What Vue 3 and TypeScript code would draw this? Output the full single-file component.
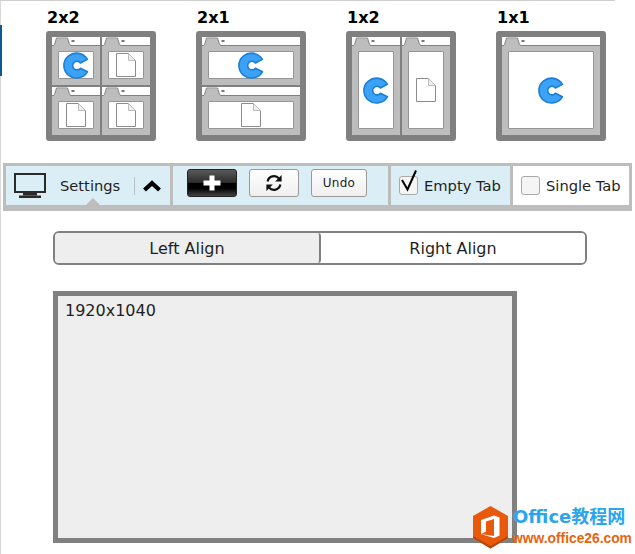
<script setup lang="ts">
type Pane = 'c' | 'doc'
interface Tile { label: string; cols: number; rows: number; panes: Pane[] }
const tiles: Tile[] = [
  { label: '2x2', cols: 2, rows: 2, panes: ['c', 'doc', 'doc', 'doc'] },
  { label: '2x1', cols: 1, rows: 2, panes: ['c', 'doc'] },
  { label: '1x2', cols: 2, rows: 1, panes: ['c', 'doc'] },
  { label: '1x1', cols: 1, rows: 1, panes: ['c'] },
]
</script>

<template>
  <div class="page">
    <i class="edge-top"></i>
    <i class="edge-left"></i>
    <i class="edge-blue"></i>

    <section class="tiles">
      <div v-for="t in tiles" :key="t.label" class="tile">
        <div class="tile-label">{{ t.label }}</div>
        <div class="tile-box" :style="{ gridTemplateColumns: `repeat(${t.cols}, 1fr)`, gridTemplateRows: `repeat(${t.rows}, 1fr)` }">
          <div v-for="(p, i) in t.panes" :key="i" class="pane">
            <div class="strip">
              <svg width="30" height="9" viewBox="0 0 30 9" class="tab">
                <path d="M1.5 10 L1.5 8.5 L2.5 8 L4.5 1.5 L15.5 1.5 L17.5 8 L19 8.5 L19 10 Z" fill="#bdbdbd" />
                <path d="M0 8.5 L1.5 8.5 L2.5 7.5 L4.5 1 L15.5 1 L17.5 7.5 L19 8.5" fill="none" stroke="#808080" stroke-width="1" />
                <rect x="19.5" y="3" width="3" height="2" fill="#777" />
              </svg>
            </div>
            <div class="pane-body">
              <div class="frame">
                <svg v-if="p === 'c'" width="28" height="27" viewBox="-1 -1 28 27">
                  <path d="M24.4 6.4 A12.6 12.4 0 1 0 24.4 18.8 L17.4 15.2 A4.3 4.3 0 1 1 17.4 10 Z" fill="#3ba2f7" stroke="#1c7fd6" stroke-width="1.6" stroke-linejoin="round" />
                </svg>
                <svg v-else width="20" height="24" viewBox="0 0 20 24">
                  <path d="M.5 .5 H12.5 L19.5 7.5 V23.5 H.5 Z" fill="#fff" stroke="#8c8c8c" />
                  <path d="M12.5 .5 V7.5 H19.5" fill="#eee" stroke="#bbb" />
                </svg>
              </div>
            </div>
          </div>
        </div>
      </div>
    </section>

    <section class="toolbar">
      <div class="group settings">
        <svg class="monitor" width="32" height="25" viewBox="0 0 32 25">
          <rect x="1" y="1" width="30" height="18" fill="none" stroke="#2a2a2a" stroke-width="2" />
          <rect x="9" y="20" width="14" height="2.5" fill="#2a2a2a" />
          <rect x="5" y="22.5" width="22" height="2.5" fill="#2a2a2a" />
        </svg>
        <span class="settings-text">Settings</span>
        <span class="vsep"></span>
        <svg class="chev" width="18" height="12" viewBox="0 0 18 12">
          <path d="M1.5 10 L9 3.2 L16.5 10" fill="none" stroke="#000" stroke-width="4.2" stroke-linejoin="miter" />
        </svg>
        <i class="notch"></i>
      </div>
      <div class="group actions">
        <button class="btn-add" type="button">
          <svg width="18" height="16" viewBox="0 0 18 16">
            <path d="M6.5 .5 H11.5 V5.5 H17.5 V10.5 H11.5 V15.5 H6.5 V10.5 H.5 V5.5 H6.5 Z" fill="#fff" />
          </svg>
        </button>
        <button class="btn-light btn-refresh" type="button">
          <svg width="18" height="18" viewBox="0 0 18 18">
            <path d="M2.6 7.5 A6.6 6.6 0 0 1 14 4.4" fill="none" stroke="#111" stroke-width="2.2" />
            <path d="M16.6 1 V7.4 H10.2 Z" fill="#111" />
            <path d="M15.4 10.5 A6.6 6.6 0 0 1 4 13.6" fill="none" stroke="#111" stroke-width="2.2" />
            <path d="M1.4 17 V10.6 H7.8 Z" fill="#111" />
          </svg>
        </button>
        <button class="btn-light btn-undo" type="button">Undo</button>
      </div>
      <label class="group check active">
        <span class="box">
          <svg width="22" height="28" viewBox="0 0 22 28">
            <path d="M5 13 L10.5 22.5 L19 3.5" fill="none" stroke="#000" stroke-width="2" />
          </svg>
        </span>
        <span class="check-text">Empty Tab</span>
      </label>
      <label class="group check plain">
        <span class="box"></span>
        <span class="check-text">Single Tab</span>
      </label>
    </section>

    <section class="segment">
      <button class="seg seg-on" type="button">Left Align</button>
      <button class="seg" type="button">Right Align</button>
    </section>

    <section class="screen">1920x1040</section>

    <div class="mark">
      <svg width="37" height="44" viewBox="0 0 37 44">
        <path d="M18.5 1 L36 11 V33 L18.5 43.5 L1 33 V11 Z" fill="#e8590c" />
        <path d="M1 33 L18.5 43.5 L36 33 V31 L18.5 41 L1 31 Z" fill="#b8450a" />
        <path d="M9 15 L22 10.5 L27.5 12.5 V30.5 L22 33 L9 29 L22 31 V14 L14 16.5 V26.5 L9 29 Z" fill="#fff" />
      </svg>
      <div class="mark-text">
        <div class="mark-top">Office教程网</div>
        <div class="mark-url">www.office26.com</div>
      </div>
    </div>
  </div>
</template>

<style scoped>
.page {
  position: relative;
  width: 635px;
  height: 554px;
  overflow: hidden;
  background: #fff;
  color: #1f1f1f;
  font-family: "DejaVu Sans", Verdana, sans-serif;
  padding-top: 8px;
  box-sizing: border-box;
}
.edge-top { position: absolute; left: 0; top: 0; width: 615px; height: 1px; background: #cfcfcf; }
.edge-left { position: absolute; left: 0; top: 0; width: 1px; height: 554px; background: #d8d8d8; }
.edge-blue { position: absolute; left: 0; top: 25px; width: 2px; height: 51px; background: #0b5a96; }

.tiles { display: flex; gap: 40px; padding-left: 46px; }
.tile { width: 110px; }
.tile-label { height: 23px; padding-left: 1px; font-size: 16px; line-height: 19px; font-weight: 700; color: #000; }
.tile-box {
  display: grid;
  gap: 2px;
  width: 110px;
  height: 110px;
  box-sizing: border-box;
  border: 6px solid #808080;
  border-radius: 3px;
  background: #808080;
}
.pane { display: flex; flex-direction: column; min-width: 0; min-height: 0; background: #bdbdbd; }
.strip { height: 9px; flex: none; box-sizing: border-box; background: #fff; border-bottom: 1px solid #808080; }
.tab { display: block; overflow: visible; }
.pane-body { flex: 1; min-height: 0; display: flex; padding: 5px 6px 6px; }
.frame {
  flex: 1;
  display: flex;
  align-items: center;
  justify-content: center;
  background: #fff;
  border: 1px solid #969696;
  border-radius: 1px;
  min-width: 0;
}

.toolbar {
  display: flex;
  gap: 3px;
  width: 629px;
  height: 48px;
  margin: 22px 0 0 3px;
  box-sizing: border-box;
  padding: 3px 3px 6px;
  background: #bdbdbd;
  font-size: 14.7px;
}
.group { display: flex; align-items: center; background: #dceef5; }
.settings { position: relative; width: 164px; padding-left: 8px; box-sizing: border-box; }
.settings-text { margin: 0 0 1px 14px; width: 74px; }
.vsep { width: 1px; height: 18px; background: #b5c2c8; }
.chev { margin-left: 8px; }
.notch {
  position: absolute;
  left: 80px;
  bottom: 0;
  width: 0;
  height: 0;
  border-left: 7px solid transparent;
  border-right: 7px solid transparent;
  border-bottom: 7px solid #bdbdbd;
}
.actions { width: 215px; box-sizing: border-box; padding: 0 0 5px 14px; gap: 12px; }
button { font-family: inherit; color: inherit; padding: 0; margin: 0; }
.btn-add {
  display: flex;
  align-items: center;
  justify-content: center;
  width: 50px;
  height: 28px;
  border: 1px solid #222;
  border-radius: 3px;
  background: linear-gradient(#5a5a5a 0%, #2c2c2c 48%, #000 52%, #000 70%, #444 100%);
}
.btn-light {
  height: 28px;
  border: 1px solid #9a9a9a;
  border-radius: 3px;
  background: linear-gradient(#fff, #efefef);
}
.btn-refresh { display: flex; align-items: center; justify-content: center; width: 50px; }
.btn-undo { width: 56px; font-size: 12px; letter-spacing: .3px; }
.check { box-sizing: border-box; gap: 6px; }
.check-text { margin-bottom: 1px; }
.active { width: 119px; padding-left: 8px; }
.plain { width: 116px; padding-left: 8px; background: #fff; }
.box {
  position: relative;
  width: 19px;
  height: 19px;
  flex: none;
  box-sizing: border-box;
  border: 1px solid #aaa;
  border-radius: 3px;
  background: #f5f5f5;
}
.box svg { position: absolute; left: -3px; top: -10px; }

.segment {
  display: flex;
  width: 534px;
  height: 34px;
  margin: 20px 0 0 53px;
  box-sizing: border-box;
  border: 2px solid #808080;
  border-radius: 6px;
  overflow: hidden;
}
.seg {
  flex: 1;
  min-width: 0;
  border: 0;
  background: #fff;
  font-size: 16px;
}
.seg-on { background: #eee; border-right: 2px solid #808080; border-radius: 0 3px 3px 0; }

.screen {
  width: 464px;
  height: 252px;
  margin: 26px 0 0 53px;
  box-sizing: border-box;
  padding: 5px 7px;
  border: 5px solid #808080;
  background: #eee;
  font-size: 16px;
  line-height: 19px;
}

.mark { position: absolute; left: 472px; top: 505px; display: flex; gap: 3px; }
.mark-top {
  margin-left: 1px;
  font-family: "DejaVu Sans", "Noto Sans CJK SC", sans-serif;
  font-size: 18px;
  line-height: 24px;
  font-weight: 700;
  color: #2ba6ee;
  white-space: nowrap;
}
.mark-url {
  font-family: "Liberation Sans", sans-serif;
  font-size: 13.8px;
  line-height: 17px;
  margin-top: 1px;
  font-weight: 700;
  color: #e8640f;
  white-space: nowrap;
}
</style>
